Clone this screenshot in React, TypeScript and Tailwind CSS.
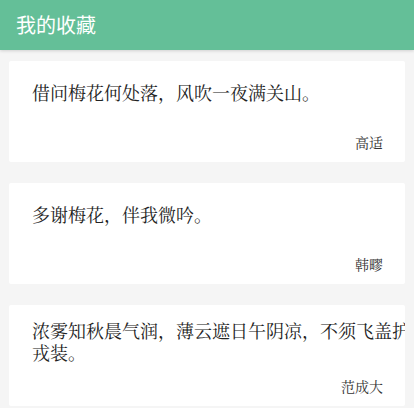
import React from "react"

interface Poem {
  id: number
  text: string
  author: string
}

const poems: Poem[] = [
  { id: 1, text: "借问梅花何处落，风吹一夜满关山。", author: "高适" },
  { id: 2, text: "多谢梅花，伴我微吟。", author: "韩疁" },
  { id: 3, text: "浓雾知秋晨气润，薄云遮日午阴凉，不须飞盖护戎装。", author: "范成大" },
]

const serif = { fontFamily: '"Noto Serif CJK SC", "Noto Sans CJK SC", serif' }

const PoemCard: React.FC<{ poem: Poem }> = ({ poem }) => {
  // 长句会折行，上边距略小
  const long = poem.text.length > 20
  return (
    <div className="mx-[9px] h-[101px] bg-white rounded-[2px] overflow-hidden flex flex-col">
      <p
        className={
          (long ? "pt-[14px]" : "pt-[20px]") +
          " ml-[23px] w-[380px] shrink-0 text-[18px] leading-[22px] text-[#222]"
        }
        style={serif}
      >
        {poem.text}
      </p>
      <div className="mt-auto pr-[22px] pb-[11px] text-right text-[14px] leading-[18px] text-[#333]" style={serif}>
        {poem.author}
      </div>
    </div>
  )
}

export default function App() {
  return (
    <div className="w-[414px] h-[408px] bg-[#f5f5f5] overflow-hidden">
      <div
        className="h-[50px] bg-[#64bf98] flex items-center pl-[16px] shadow-[0_1px_3px_rgba(0,0,0,0.15)] relative z-10"
        style={{ fontFamily: '"Noto Sans CJK SC", sans-serif' }}
      >
        <span className="text-white text-[20px]">我的收藏</span>
      </div>
      <div className="pt-[11px] flex flex-col gap-[21px]">
        {poems.map((p) => (
          <PoemCard key={p.id} poem={p} />
        ))}
      </div>
    </div>
  )
}
